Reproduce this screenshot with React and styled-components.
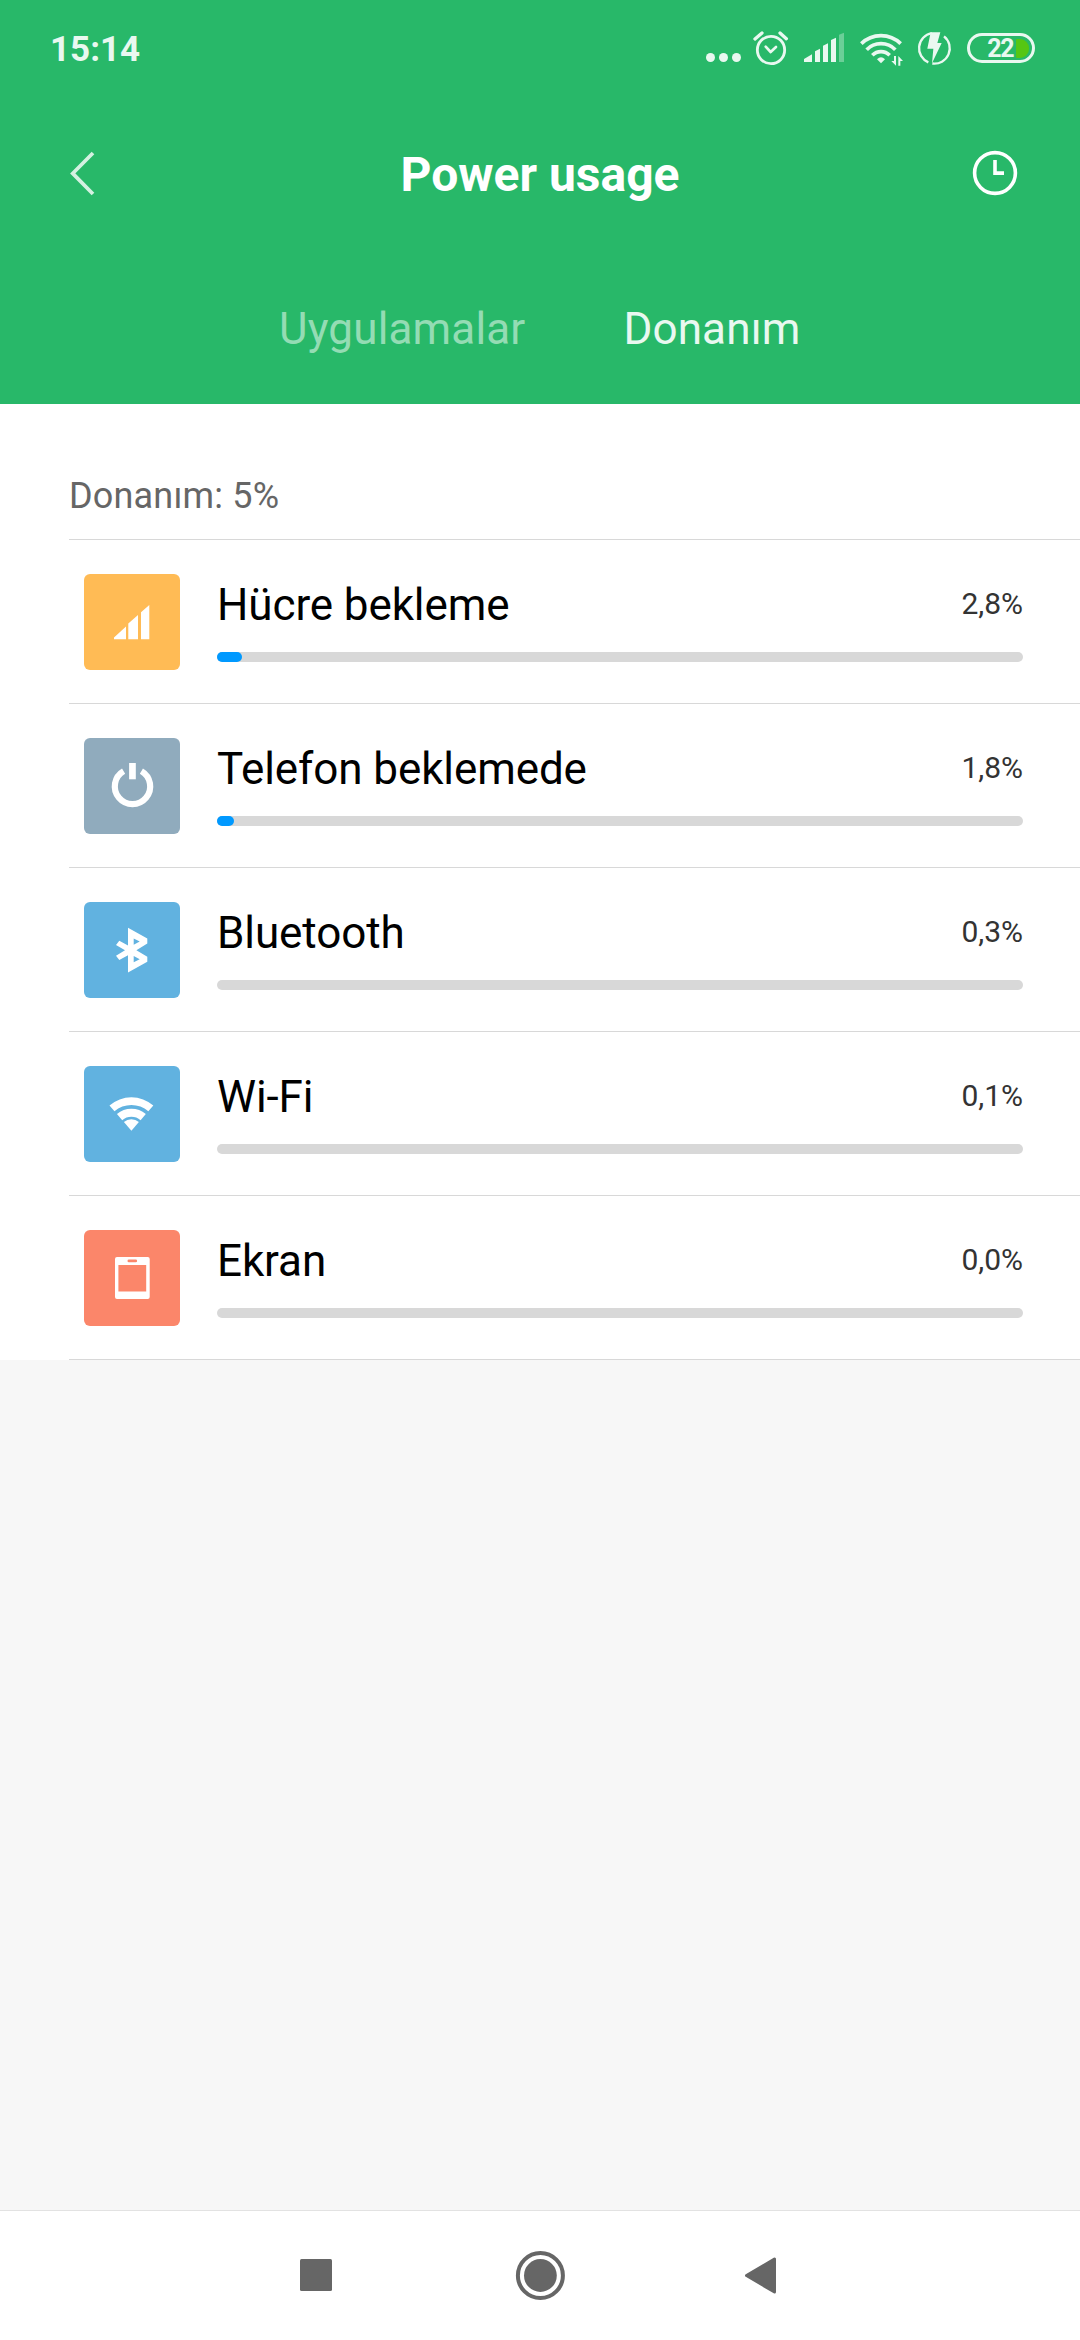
import React from "react";
import styled, { createGlobalStyle } from "styled-components";

const GlobalStyle = createGlobalStyle`
  * { box-sizing: border-box; }
  body { margin: 0; background: #f7f7f7; }
`;

const Screen = styled.div`
  display: flex;
  flex-direction: column;
  width: 1080px;
  height: 2340px;
  overflow: hidden;
  background: #f7f7f7;
  font-family: Roboto, "Noto Sans", sans-serif;
`;

const Header = styled.header`
  display: flex;
  flex-direction: column;
  height: 404px;
  background: #28b869;
`;

const StatusBar = styled.div`
  display: flex;
  align-items: center;
  justify-content: space-between;
  height: 100px;
  padding: 0 45px 0 50px;
`;

const StatusTime = styled.span`
  color: #e9f8f0;
  font-size: 35px;
  line-height: 40px;
  font-weight: 700;
`;

const StatusIcons = styled.div`
  display: flex;
  align-items: center;
  gap: 10px;
`;

const StatusIcon = styled.svg`
  display: block;
  width: ${(p) => p.$width}px;
  height: 40px;
  fill: #e9f8f0;
  stroke: none;
`;

const Battery = styled.div`
  display: flex;
  align-items: center;
  justify-content: flex-end;
  width: 68px;
  height: 30px;
  margin-top: -4px;
  padding-right: 3px;
  border: 3px solid #e9f8f0;
  border-radius: 15px;
`;

const BatteryText = styled.span`
  color: #e9f8f0;
  font-size: 25px;
  line-height: 24px;
  font-weight: 700;
  letter-spacing: -1.5px;
  margin: 2px 3px 0 0;
`;

const BatteryLevel = styled.span`
  width: 13px;
  height: 19px;
  background: #56c613;
  border-radius: 1px 9px 9px 1px;
`;

const TitleBar = styled.div`
  display: grid;
  grid-template-columns: 60px 1fr 60px;
  align-items: center;
  height: 146px;
  padding: 0 55px;
`;

const TitleButton = styled.button`
  display: flex;
  align-items: center;
  justify-content: center;
  width: 60px;
  height: 60px;
  padding: 0;
  border: 0;
  background: none;
`;

const Title = styled.h1`
  margin: 4px 0 0;
  color: #fff;
  font-size: 48px;
  line-height: 56px;
  font-weight: 700;
  text-align: center;
`;

const Tabs = styled.nav`
  display: flex;
  gap: 98px;
  padding: 57px 0 0 279px;
`;

const Tab = styled.a`
  color: ${(p) => (p.$active ? "#e9f8f0" : "#94dcb4")};
  font-size: 44px;
  line-height: 52px;
  letter-spacing: 0.15px;
`;

const List = styled.main`
  display: flex;
  flex-direction: column;
  height: 956px;
  padding: 66px 0 0 69px;
  background: #fff;
`;

const SectionTitle = styled.h2`
  display: flex;
  align-items: center;
  flex: none;
  height: 70px;
  margin: 0;
  padding-bottom: 17px;
  border-bottom: 1px solid #d8d8d8;
  color: #666;
  font-size: 36px;
  line-height: 42px;
  font-weight: 400;
  letter-spacing: 0.18px;
`;

const Row = styled.section`
  display: flex;
  gap: 37px;
  height: 164px;
  padding: 34px 57px 0 15px;
  border-bottom: 1px solid #d8d8d8;
`;

const Tile = styled.div`
  flex: none;
  width: 96px;
  height: 96px;
  border-radius: 6px;
  background: ${(p) => p.$color};
  svg { display: block; }
`;

const RowBody = styled.div`
  flex: 1;
  display: flex;
  flex-direction: column;
`;

const RowText = styled.div`
  display: flex;
  justify-content: space-between;
  height: 78px;
`;

const Name = styled.span`
  color: #000;
  font-size: 44px;
  line-height: 52px;
  letter-spacing: -0.1px;
  padding-top: 5px;
`;

const Percent = styled.span`
  color: #333;
  font-size: 30px;
  line-height: 36px;
  padding-top: 12px;
`;

const Track = styled.div`
  height: 10px;
  border-radius: 5px;
  background: #d8d8d8;
`;

const Fill = styled.div`
  height: 10px;
  border-radius: 5px;
  background: #0099ff;
`;

const NavBar = styled.footer`
  display: flex;
  align-items: center;
  justify-content: center;
  gap: 180px;
  height: 130px;
  margin-top: auto;
  border-top: 1px solid #e2e2e2;
  background: #fff;
`;

const NavButton = styled.button`
  display: block;
  width: 50px;
  height: 50px;
  padding: 0;
  border: 0;
  background: none;
  svg { display: block; }
`;

const sector = (cx, cy, r, inner) => {
  const a = (41 * Math.PI) / 180;
  const s = Math.sin(a);
  const c = Math.cos(a);
  return `M${cx - r * s} ${cy - r * c}A${r} ${r} 0 0 1 ${cx + r * s} ${cy - r * c}L${cx + inner * s} ${cy - inner * c}A${inner || 1} ${inner || 1} 0 0 0 ${cx - inner * s} ${cy - inner * c}Z`;
};

const glyphs = {
  cell: (
    <path d="M30 63.6L42 52.5V65.2H30ZM44.3 49.6L54 41V65.2H44.3ZM57 38.3L65.3 31V65.2H57Z" />
  ),
  power: (
    <>
      <path d="M39.6 33.1A17.7 17.7 0 1 0 57.4 33.1" fill="none" stroke="#fff" strokeWidth="6.2" />
      <rect x="45.1" y="25" width="6.7" height="16.3" />
    </>
  ),
  bluetooth: (
    <path
      fillRule="evenodd"
      d="M44 25.7L63.3 36.6V41.6L52.4 48.2L63.3 54.8V59.8L44 70.5V53.2L35.3 58L32 53.7L41 48.3L32 43L35.3 38.7L44 43.4ZM49.7 36.5V42.7L55.7 39.4ZM49.7 54V60.3L55.7 57.2Z"
    />
  ),
  wifi: (
    <>
      <path d={sector(47.4, 64.7, 33.4, 25.8)} />
      <path d={sector(47.4, 64.7, 22, 14)} />
      <path d={sector(47.4, 64.7, 11.4, 0)} />
    </>
  ),
  screen: (
    <path
      fillRule="evenodd"
      d="M33 27H63.7a2 2 0 0 1 2 2V67a2 2 0 0 1-2 2H33a2 2 0 0 1-2-2V29a2 2 0 0 1 2-2ZM34.4 35V61.6H62.2V35ZM44.9 29.5a1.4 1.4 0 0 0 0 2.8H51.7a1.4 1.4 0 0 0 0-2.8Z"
    />
  ),
};

const items = [
  { icon: "cell", color: "#ffbb55", name: "Hücre bekleme", percent: "2,8%", fill: 25 },
  { icon: "power", color: "#90abbd", name: "Telefon beklemede", percent: "1,8%", fill: 17 },
  { icon: "bluetooth", color: "#61b2e0", name: "Bluetooth", percent: "0,3%", fill: 0 },
  { icon: "wifi", color: "#61b2e0", name: "Wi-Fi", percent: "0,1%", fill: 0 },
  { icon: "screen", color: "#fb866a", name: "Ekran", percent: "0,0%", fill: 0 },
];

const INK = "#e9f8f0";

function StatusGlyphs() {
  return (
    <StatusIcons>
      <StatusIcon $width={37} viewBox="45 60 111 120">
        <circle cx="61.5" cy="142.5" r="13.5" />
        <circle cx="100.5" cy="142.5" r="13.5" />
        <circle cx="139.5" cy="142.5" r="13.5" />
      </StatusIcon>
      <StatusIcon $width={40} viewBox="186 60 120 120">
        <g fill="none" stroke={INK} strokeLinecap="round" strokeLinejoin="round">
          <circle cx="243" cy="120" r="41" strokeWidth="8.5" />
          <path d="M227 110L242 126L258 111" strokeWidth="8" />
          <path d="M195 87L216 69M270 69L289 86" strokeWidth="10" />
        </g>
      </StatusIcon>
      <StatusIcon $width={45} viewBox="336 60 135 120">
        <path d="M342 147L366 133V156H342ZM375 124L390 116V156H375ZM399 107L414 100V156H399ZM423 90L438 83V156H423Z" />
        <path d="M447 74L462 68V156H447Z" opacity="0.35" />
      </StatusIcon>
      <StatusIcon $width={48} viewBox="21 60 144 120">
        <g fill="none" stroke={INK} strokeWidth="11">
          <path d="M34 101A84 84 0 0 1 152 101" />
          <path d="M50 119A60 60 0 0 1 136 119" />
          <path d="M67 136A36 36 0 0 1 119 136" />
        </g>
        <path d="M81 148Q93 136 105 148L93 160Z" />
        <path d="M132 138H138V167L124 153H132ZM145 167V138L159 153H151V167Z" />
      </StatusIcon>
      <StatusIcon $width={42} viewBox="195 60 126 120">
        <g fill="none" stroke={INK} strokeWidth="7">
          <path d="M245 69.5A46 46 0 0 0 235 157" />
          <path d="M282 79A46 46 0 0 1 247 160.5" />
        </g>
        <path d="M242 67H271L262 99H275L246 160L250 116H232Z" />
      </StatusIcon>
      <Battery>
        <BatteryText>22</BatteryText>
        <BatteryLevel />
      </Battery>
    </StatusIcons>
  );
}

export default function App() {
  return (
    <Screen>
      <GlobalStyle />
      <Header>
        <StatusBar>
          <StatusTime>15:14</StatusTime>
          <StatusGlyphs />
        </StatusBar>
        <TitleBar>
          <TitleButton aria-label="Back">
            <svg width="60" height="60" viewBox="55 143 60 60">
              <path d="M93 153L72.7 173.4L93 194" fill="none" stroke="#d4f1e1" strokeWidth="3.7" />
            </svg>
          </TitleButton>
          <Title>Power usage</Title>
          <TitleButton aria-label="History">
            <svg width="60" height="60" viewBox="965 143 60 60" fill="none" stroke="#fff" strokeWidth="3.6">
              <circle cx="995" cy="173" r="20.4" />
              <path d="M995 160V173.1H1004" />
            </svg>
          </TitleButton>
        </TitleBar>
        <Tabs>
          <Tab>Uygulamalar</Tab>
          <Tab $active>Donanım</Tab>
        </Tabs>
      </Header>
      <List>
        <SectionTitle>Donanım: 5%</SectionTitle>
        {items.map((item) => (
          <Row key={item.name}>
            <Tile $color={item.color}>
              <svg width="96" height="96" viewBox="0 0 96 96" fill="#fff">
                {glyphs[item.icon]}
              </svg>
            </Tile>
            <RowBody>
              <RowText>
                <Name>{item.name}</Name>
                <Percent>{item.percent}</Percent>
              </RowText>
              <Track>{item.fill > 0 && <Fill style={{ width: item.fill }} />}</Track>
            </RowBody>
          </Row>
        ))}
      </List>
      <NavBar>
        <NavButton aria-label="Recents">
          <svg width="50" height="50" viewBox="0 0 50 50" fill="#666">
            <rect x="15" y="8" width="32" height="32" rx="1.5" />
          </svg>
        </NavButton>
        <NavButton aria-label="Home">
          <svg width="50" height="50" viewBox="0 0 50 50">
            <circle cx="25.4" cy="24.5" r="16.4" fill="#666" />
            <circle cx="25.4" cy="24.5" r="22.5" fill="none" stroke="#666" strokeWidth="4" />
          </svg>
        </NavButton>
        <NavButton aria-label="Back">
          <svg width="50" height="50" viewBox="0 0 50 50" fill="#666" stroke="#666" strokeWidth="3" strokeLinejoin="round">
            <path d="M1.5 24.5L29.5 8V41Z" />
          </svg>
        </NavButton>
      </NavBar>
    </Screen>
  );
}
